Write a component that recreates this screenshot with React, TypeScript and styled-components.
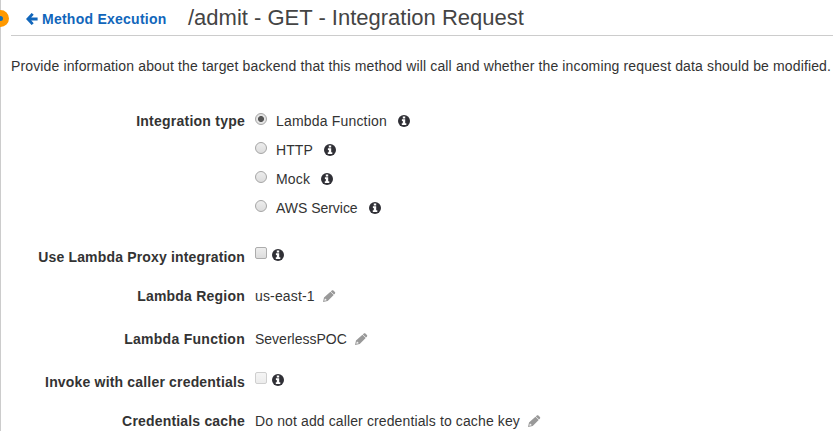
import React from "react";
import styled, { createGlobalStyle } from "styled-components";

const GlobalStyle = createGlobalStyle`
  * { box-sizing: border-box; }
  body {
    margin: 0;
    background: #fff;
    overflow: hidden;
    font-family: "Liberation Sans", Arial, sans-serif;
    font-size: 14px;
    line-height: 20px;
    color: #333;
  }
`;

const Panel = styled.main`
  position: relative;
  width: 833px;
  height: 431px;
  border-left: 1px solid #ccc;
  white-space: nowrap;
`;

const StepMarker = styled.span`
  position: absolute;
  left: -9px;
  top: 10px;
  width: 17px;
  height: 17px;
  border-radius: 50%;
  border: 6px solid #ff9900;
  background: #146eb4;
`;

const Header = styled.header`
  display: flex;
  height: 36px;
  margin-left: 10px;
  border-bottom: 1px solid #ccc;
`;

const BackLink = styled.a`
  display: flex;
  width: 177px;
  padding: 9px 0 0 15px;
  color: #1166bb;
  font-weight: bold;
  letter-spacing: 0.25px;
  svg { margin: 4px 4px 0 0; }
`;

const Title = styled.h1`
  margin: 0;
  padding-top: 5px;
  font-size: 22px;
  line-height: 25px;
  font-weight: normal;
  color: #444;
`;

const Intro = styled.p`
  margin: 20px 0 35px 10px;
  letter-spacing: 0.137px;
`;

const Field = styled.div<{ $h: number }>`
  display: flex;
  height: ${(p) => p.$h}px;
`;

const Label = styled.div<{ $spacing?: number }>`
  width: 244px;
  margin-right: 10px;
  text-align: right;
  font-weight: bold;
  letter-spacing: ${(p) => p.$spacing ?? 0.2}px;
`;

const Value = styled.div<{ $spacing?: number }>`
  display: flex;
  letter-spacing: ${(p) => p.$spacing ?? 0}px;
  svg { margin: 4px 0 0 8px; }
`;

const Options = styled.div`
  display: grid;
  grid-auto-rows: 29px;
`;

const Option = styled.label<{ $spacing: number }>`
  display: flex;
  letter-spacing: ${(p) => p.$spacing}px;
  svg { margin: 4px 0 0 11px; }
`;

const Radio = styled.span<{ $checked?: boolean }>`
  width: 12px;
  height: 12px;
  margin: 2px 9px 0 0;
  border: 1px solid #a5a5a5;
  border-radius: 50%;
  background: ${(p) =>
    p.$checked
      ? "radial-gradient(circle, #555 0 2.6px, #e4e4e4 3.4px)"
      : "linear-gradient(#ededed, #dcdcdc)"};
`;

const CheckRow = styled.div`
  display: flex;
  svg { margin: 2px 0 0 5px; }
`;

const Checkbox = styled.span<{ $disabled?: boolean }>`
  width: 12px;
  height: 12px;
  border: 1px solid ${(p) => (p.$disabled ? "#cfcfcf" : "#acacac")};
  border-radius: 2px;
  background: ${(p) =>
    p.$disabled ? "linear-gradient(#f5f5f5, #ececec)" : "linear-gradient(#ededed, #dcdcdc)"};
`;

const InfoIcon = () => (
  <svg width="12" height="12" viewBox="0 0 12 12">
    <circle cx="6" cy="6" r="6" fill="#303036" />
    <path d="M4.8 1.4h2.4v2H4.8zM3.9 4.3h3.3v4h1.1v1.8H3.8V8.3h1V6h-.9z" fill="#fff" />
  </svg>
);

const PencilIcon = () => (
  <svg width="13" height="12" viewBox="0 0 13 12" fill="#999">
    <path d="M8.8.5c.4-.5 1.1-.5 1.6 0l1.5 1.6c.5.5.5 1.1 0 1.6l-.9.8-3.2-3.1z" />
    <path fillRule="evenodd" d="M7.4 1.7l3.3 3.2L4.7 11 0 12l1-4.5zM1.8 8.7l-.5 2 .2.1 2-.5v-.8h-.8v-.8z" />
  </svg>
);

const ArrowIcon = () => (
  <svg width="12" height="12" viewBox="0 0 12 12">
    <path d="M6.7 .9L1.9 6l4.8 5.1M2 6h9.6" fill="none" stroke="#1166bb" strokeWidth="2.8" />
  </svg>
);

const integrationTypes = [
  { name: "Lambda Function", spacing: 0.18 },
  { name: "HTTP", spacing: 0.1 },
  { name: "Mock", spacing: 0.2 },
  { name: "AWS Service", spacing: -0.03 },
];

export default function App() {
  return (
    <>
      <GlobalStyle />
      <Panel>
        <StepMarker />
        <Header>
          <BackLink><ArrowIcon />Method Execution</BackLink>
          <Title>/admit - GET - Integration Request</Title>
        </Header>
        <Intro>
          Provide information about the target backend that this method will call and whether the incoming request data should be modified.
        </Intro>
        <Field $h={136}>
          <Label $spacing={0.24}>Integration type</Label>
          <Options>
            {integrationTypes.map(({ name, spacing }, i) => (
              <Option key={name} $spacing={spacing}>
                <Radio $checked={i === 0} />
                {name}
                <InfoIcon />
              </Option>
            ))}
          </Options>
        </Field>
        <Field $h={39}>
          <Label $spacing={0.16}>Use Lambda Proxy integration</Label>
          <CheckRow><Checkbox /><InfoIcon /></CheckRow>
        </Field>
        <Field $h={43}>
          <Label $spacing={0.22}>Lambda Region</Label>
          <Value $spacing={0.15}>us-east-1<PencilIcon /></Value>
        </Field>
        <Field $h={43}>
          <Label $spacing={0.28}>Lambda Function</Label>
          <Value>SeverlessPOC<PencilIcon /></Value>
        </Field>
        <Field $h={39}>
          <Label $spacing={0.18}>Invoke with caller credentials</Label>
          <CheckRow><Checkbox $disabled /><InfoIcon /></CheckRow>
        </Field>
        <Field $h={20}>
          <Label $spacing={0.18}>Credentials cache</Label>
          <Value $spacing={0.12}>Do not add caller credentials to cache key<PencilIcon /></Value>
        </Field>
      </Panel>
    </>
  );
}
